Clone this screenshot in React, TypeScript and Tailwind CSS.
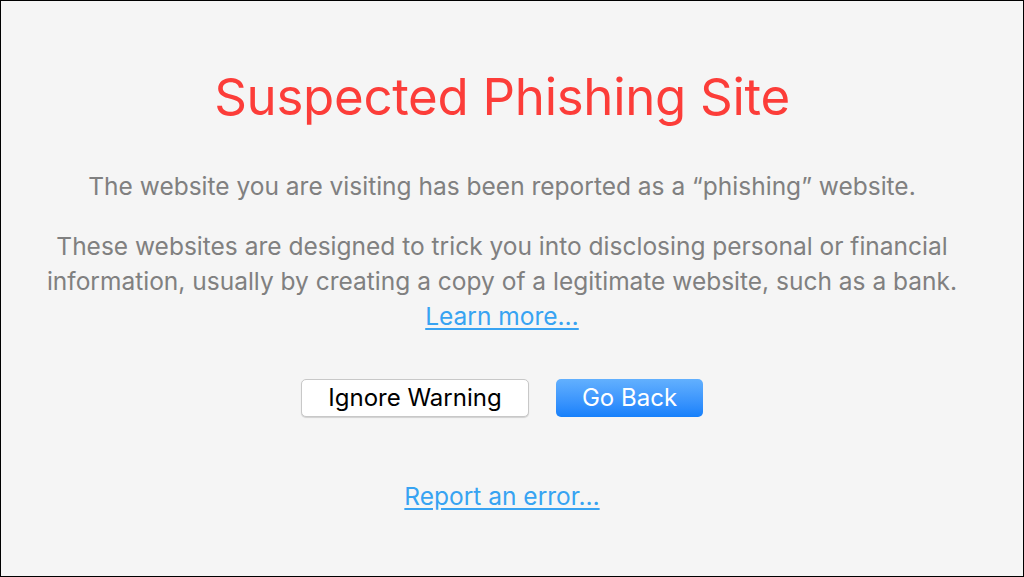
export default function App() {
  return (
    <div
      className="w-[1024px] h-[577px] bg-[#f5f5f5] border border-black flex flex-col items-center pr-[20px]"
      style={{ fontFamily: "Inter, 'Noto Sans', sans-serif" }}
    >
      <h1 className="mt-[62px] text-[51px] leading-[68px] text-[#fc3d39] font-normal tracking-[-0.3px]">
        Suspected Phishing Site
      </h1>
      <p className="mt-[38px] text-[24.5px] leading-[35px] text-[#808080] text-center">
        The website you are visiting has been reported as a “phishing” website.
      </p>
      <p className="mt-[25px] text-[24.5px] leading-[35px] text-[#808080] text-center">
        These websites are designed to trick you into disclosing personal or financial
        <br />
        information, usually by creating a copy of a legitimate website, such as a bank.
        <br />
        <a href="#" className="text-[#37a3f2] underline underline-offset-[3px]">
          Learn more…
        </a>
      </p>
      <div className="mt-[45px] flex gap-[27px]">
        <button className="w-[228px] h-[38px] bg-white border border-[#c8c8c8] rounded-[5px] shadow-[0_1px_1px_rgba(0,0,0,0.15)] text-[24px] text-black">
          Ignore Warning
        </button>
        <button className="w-[147px] h-[38px] rounded-[5px] bg-gradient-to-b from-[#62b0fe] to-[#1580fb] text-[24px] text-white">
          Go Back
        </button>
      </div>
      <a href="#" className="mt-[62px] text-[24.5px] leading-[35px] text-[#37a3f2] underline underline-offset-[3px]">
        Report an error…
      </a>
    </div>
  );
}
